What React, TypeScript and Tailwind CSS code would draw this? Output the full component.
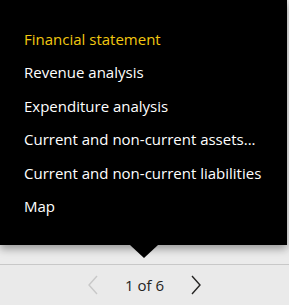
import React from "react";

const pages = [
  "Financial statement",
  "Revenue analysis",
  "Expenditure analysis",
  "Current and non-current assets...",
  "Current and non-current liabilities",
  "Map",
];

const App = () => {
  const current = 0;

  return (
    <div className="relative flex h-[305px] w-[289px] flex-col overflow-hidden bg-[#eaeaea] font-['Segoe_UI','Open_Sans',sans-serif]">
      <div className="h-[265px] border-b border-[#c8c8c8] bg-[#ebebeb]"></div>
      <div className="flex h-[40px] items-center justify-center gap-[26px] text-[#252423]">
        <svg width="12" height="20" viewBox="0 0 12 20" className="text-[#c8c8c8]">
          <path d="M10 1 L2 10 L10 19" fill="none" stroke="currentColor" strokeWidth="1.4" />
        </svg>
        <span className="text-[15px]">1 of 6</span>
        <svg width="12" height="20" viewBox="0 0 12 20">
          <path d="M2 1 L10 10 L2 19" fill="none" stroke="currentColor" strokeWidth="1.4" />
        </svg>
      </div>

      <div className="absolute left-0 top-0 h-[245px] w-[287px] bg-black pt-[23px] shadow-[0_4px_8px_rgba(0,0,0,0.35)]">
        <ul className="flex flex-col">
          {pages.map((page, i) => (
            <li
              key={page}
              className={`pl-[24px] text-[15px] leading-[33.4px] ${
                i === current ? "text-[#f2c811]" : "text-white"
              }`}
            >
              {page}
            </li>
          ))}
        </ul>
        <div className="absolute left-[130px] top-[245px] h-0 w-0 border-x-[14px] border-t-[13px] border-x-transparent border-t-black"></div>
      </div>
    </div>
  );
};

export default App;
